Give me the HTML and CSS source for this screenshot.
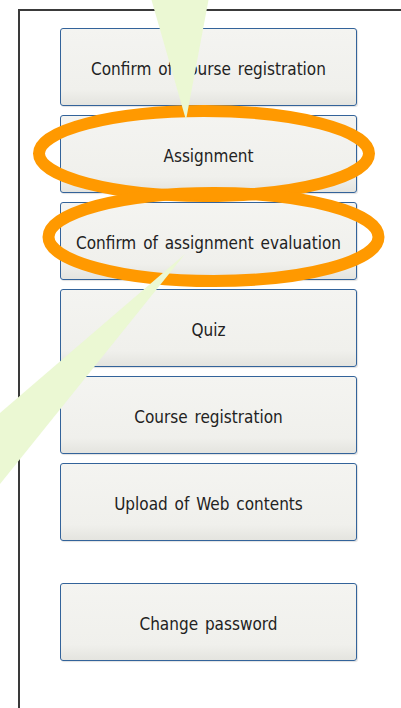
FILE: index.html
```html
<!DOCTYPE html>
<html lang="en">
<head>
<meta charset="utf-8">
<title>Menu</title>
<link rel="stylesheet" href="styles.css">
</head>
<body>
<div class="frame">
  <nav class="menu">
    <a class="menu-btn" href="#">Confirm of course registration</a>
    <a class="menu-btn" href="#">Assignment</a>
    <a class="menu-btn" href="#">Confirm of assignment evaluation</a>
    <a class="menu-btn" href="#">Quiz</a>
    <a class="menu-btn" href="#">Course registration</a>
    <a class="menu-btn" href="#">Upload of Web contents</a>
    <a class="menu-btn menu-btn-sep" href="#">Change password</a>
  </nav>
</div>

<!-- callout annotations drawn over the menu -->
<svg class="callouts" width="401" height="708" viewBox="0 0 401 708" aria-hidden="true">
  <ellipse cx="204" cy="153.5" rx="165" ry="42.5" fill="none" stroke="#ff9900" stroke-width="12"/>
  <ellipse cx="213.5" cy="237" rx="165" ry="44" fill="none" stroke="#ff9900" stroke-width="12"/>
  <polygon points="151.5,0 208.5,0 186,120" fill="#ebf8d3"/>
  <polygon points="185,254 0,413 0,484" fill="#ebf8d3"/>
</svg>
</body>
</html>
```
FILE: styles.css
```css
html, body {
  margin: 0;
  padding: 0;
  background: #ffffff;
}

body {
  position: relative;
  width: 401px;
  height: 708px;
  overflow: hidden;
  font-family: "DejaVu Sans Condensed", "DejaVu Sans", sans-serif;
}

/* open frame: only the top and left edges are visible in the window */
.frame {
  margin: 9px 0 0 18px;
  width: 383px;
  height: 699px;
  border-top: 2px solid #3a3a3a;
  border-left: 2px solid #3a3a3a;
  padding: 17px 0 0 40px;
  box-sizing: border-box;
}

.menu {
  display: flex;
  flex-direction: column;
  gap: 9px;
  width: 297px;
}

.menu-btn {
  display: flex;
  align-items: center;
  justify-content: center;
  height: 78px;
  box-sizing: border-box;
  padding-top: 4px;
  border: 1px solid #33639a;
  border-radius: 3px;
  background: linear-gradient(#f4f4f1 0%, #f0f0ec 80%, #e4e4df 100%);
  box-shadow: 1px 1px 1px rgba(0, 0, 0, 0.12);
  color: #222222;
  font-size: 17px;
  word-spacing: 2px;
  text-decoration: none;
}

.menu-btn-sep {
  margin-top: 33px;
}

.callouts {
  position: absolute;
  top: 0;
  left: 0;
  pointer-events: none;
}
```
